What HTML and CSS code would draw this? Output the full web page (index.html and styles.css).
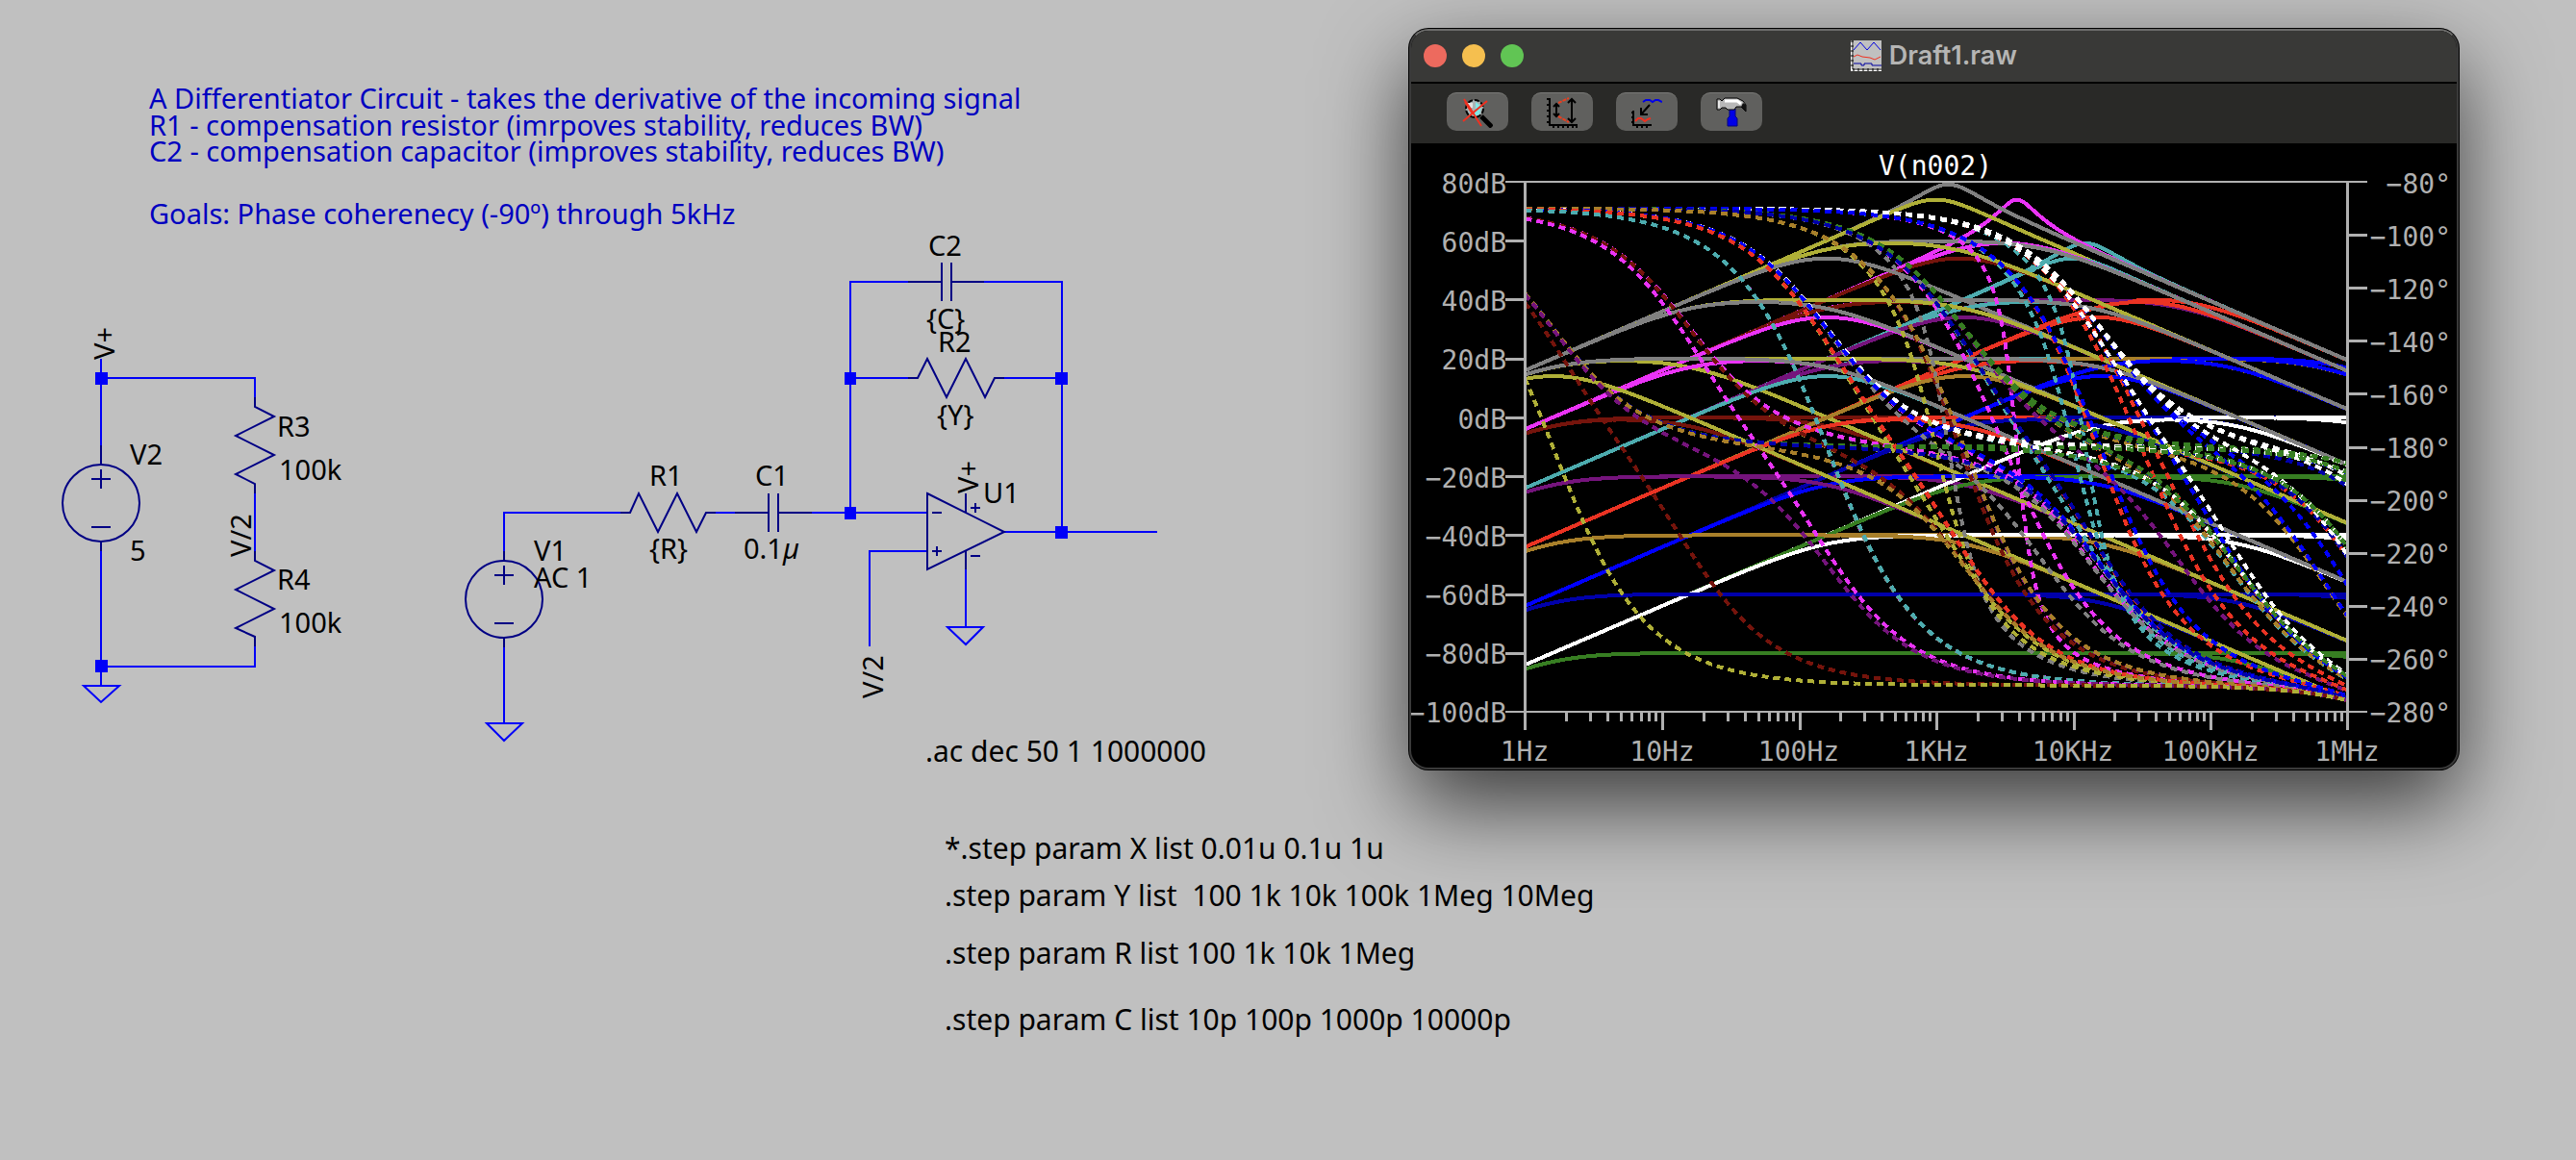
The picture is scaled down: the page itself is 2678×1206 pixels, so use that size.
FILE: index.html
```html
<!DOCTYPE html>
<html lang="en">
<head>
<meta charset="utf-8">
<title>Differentiator circuit</title>
<link rel="stylesheet" href="styles.css">
</head>
<body>
<main class="desk">
  <svg class="schematic" viewBox="0 0 2678 1206" role="img" aria-label="Differentiator circuit schematic">
    <g class="wire">
      <!-- supply and divider -->
      <path d="M105 373V463M105 393H265V413M265 513V573M265 672V693H105M105 573V713M87 713H124L105 730Z"/>
      <!-- input source and series network -->
      <path d="M524 573V533H645M744 533H764M844 533H964M524 673V752M506 752H543L524 770Z"/>
      <!-- feedback and output -->
      <path d="M884 533V293H944M1023 293H1104V553M884 393H944M1044 393H1104M964 573H904V672M1044 553H1203M1004 592V652M985 652H1022L1004 670Z"/>
    </g>
    <g class="part">
      <circle cx="105" cy="523" r="40"/>
      <path d="M105 463V483M105 563V573M95 498H115M105 488V508M95 548H115"/>
      <path d="M265 413V423L285 433L245 453L285 473L245 493L265 503V513"/>
      <path d="M265 573V583L285 593L245 613L285 633L245 653L265 662V672"/>
      <circle cx="524" cy="623" r="40"/>
      <path d="M524 573V583M524 663V673M514 598H534M524 588V608M514 648H534"/>
      <path d="M645 533H655L664 513L684 553L704 513L724 553L734 533H744"/>
      <path d="M764 533H799M799 513V553M809 513V553M809 533H844"/>
      <path d="M944 293H979M979 273V313M989 273V313M989 293H1023"/>
      <path d="M944 393H954L964 373L984 413L1004 373L1024 413L1034 393H1044"/>
      <path d="M964 513L1044 553L964 592ZM969 533H979M969 573H979M974 568V578M1004 513V533M1004 573V592M1009 528H1019M1014 523V533M1009 578H1019"/>
    </g>
    <g class="node">
      <rect x="99" y="387" width="13" height="13"/>
      <rect x="99" y="686" width="13" height="13"/>
      <rect x="878" y="387" width="12" height="13"/>
      <rect x="878" y="527" width="12" height="13"/>
      <rect x="1097" y="387" width="13" height="13"/>
      <rect x="1097" y="547" width="13" height="13"/>
    </g>
    <g class="comment">
      <text x="155" y="113">A Differentiator Circuit - takes the derivative of the incoming signal</text>
      <text x="155" y="141">R1 - compensation resistor (imrpoves stability, reduces BW)</text>
      <text x="155" y="168">C2 - compensation capacitor (improves stability, reduces BW)</text>
      <text x="155" y="233">Goals: Phase coherenecy (-90º) through 5kHz</text>
    </g>
    <g class="label">
      <text transform="translate(119 374) rotate(-90)">V+</text>
      <text x="135" y="483">V2</text>
      <text x="135" y="583">5</text>
      <text x="288" y="454">R3</text>
      <text x="290" y="499">100k</text>
      <text transform="translate(261 579) rotate(-90)">V/2</text>
      <text x="288" y="613">R4</text>
      <text x="290" y="658">100k</text>
      <text x="555" y="583">V1</text>
      <text x="555" y="611">AC 1</text>
      <text x="675" y="505">R1</text>
      <text x="675" y="581">{R}</text>
      <text x="785" y="505">C1</text>
      <text x="773" y="581">0.1<tspan class="mu">µ</tspan></text>
      <text x="965" y="266">C2</text>
      <text x="963" y="342">{C}</text>
      <text x="975" y="366">R2</text>
      <text x="974" y="442">{Y}</text>
      <text transform="translate(1017 513) rotate(-90)">V+</text>
      <text x="1022" y="523">U1</text>
      <text transform="translate(918 726) rotate(-90)">V/2</text>
    </g>
    <g class="directive">
      <text x="962" y="792">.ac dec 50 1 1000000</text>
      <text x="982" y="893">*.step param X list 0.01u 0.1u 1u</text>
      <text x="982" y="942">.step param Y list&#160; 100 1k 10k 100k 1Meg 10Meg</text>
      <text x="982" y="1002">.step param R list 100 1k 10k 1Meg</text>
      <text x="982" y="1071">.step param C list 10p 100p 1000p 10000p</text>
    </g>
  </svg>

  <section class="window" aria-label="Draft1.raw">
    <header class="titlebar">
      <div class="lights">
        <button class="light close" aria-label="Close"></button>
        <button class="light minimize" aria-label="Minimize"></button>
        <button class="light zoom" aria-label="Zoom"></button>
      </div>
      <h1 class="title">
        <svg class="icon" viewBox="0 0 32 32" aria-hidden="true">
          <rect width="32" height="32" fill="#c0c0c0"/>
          <rect width="3" height="32" fill="#fff"/><rect y="29" width="32" height="3" fill="#fff"/>
          <path d="M2 0V30H32" fill="none" stroke="#000" stroke-width="1"/>
          <path d="M0 1H3M0 6H3M0 11H3M0 16H3M0 21H3M0 26H3M3 29V32M8 29V32M13 29V32M18 29V32M23 29V32M28 29V32" stroke="#000"/>
          <path d="M3 10L10 2L17 10L24 2L31 10" fill="none" stroke="#0000e0"/>
          <path d="M3 17L7 15L12 17L20 18L25 20L31 17" fill="none" stroke="#f03020" stroke-width="1"/>
          <path d="M3 24H11V26H14V24H22V26H32" fill="none" stroke="#0000a0" stroke-width="1"/>
        </svg>
        Draft1.raw
      </h1>
    </header>
    <div class="toolbar" role="toolbar" aria-label="Plot tools">
      <button class="tool" aria-label="Zoom to fit">
        <svg class="icon" viewBox="0 0 32 32" aria-hidden="true">
          <path d="M20 20L31 31" stroke="#000" stroke-width="5"/>
          <circle cx="13" cy="12" r="9" fill="#a9b4b4" stroke="#000" stroke-width="2" stroke-dasharray="5 2"/>
          <path d="M14 5L20 10L18 18L12 20L14 12Z" fill="#7fe8e8"/>
          <path d="M6 6H11V11H6Z" fill="#e0e0e0"/>
          <path d="M2 2L8 11L20 30M26 4L14 14L1 25M3 5L10 16" fill="none" stroke="#f03020" stroke-width="2"/>
        </svg>
      </button>
      <button class="tool" aria-label="Autorange">
        <svg class="icon" viewBox="0 0 32 32" aria-hidden="true">
          <path d="M3 1V29H32" fill="none" stroke="#000" stroke-width="2"/>
          <path d="M0 2H3M0 8H3M0 14H3M0 20H3M0 26H3M7 29V32M12 29V32M17 29V32M22 29V32M27 29V32M31 29V32" stroke="#000" stroke-width="2"/>
          <path d="M10 8V19M7 10L10 7L13 10M7 17L10 20L13 17M26 2V26M22 6L26 2L30 6M22 22L26 26L30 22" fill="none" stroke="#000" stroke-width="2"/>
          <path d="M12 6L23 1M12 20L23 26" stroke="#e84020" stroke-width="2" stroke-dasharray="4 1"/>
        </svg>
      </button>
      <button class="tool" aria-label="Add trace">
        <svg class="icon" viewBox="0 0 32 32" aria-hidden="true">
          <path d="M2 14V29H21M0 16H2M0 21H2M0 26H2M6 29V32M11 29V32M16 29V32" fill="none" stroke="#000" stroke-width="2"/>
          <path d="M19 8L10 18M10 11V18H17" fill="none" stroke="#000" stroke-width="2"/>
          <path d="M12 5L15 3L19 3L22 5L25 3L28 3L32 5" fill="none" stroke="#0000e8" stroke-width="2"/>
          <path d="M4 25L7 22H10L14 25L17 23L20 22" fill="none" stroke="#f03020" stroke-width="2"/>
        </svg>
      </button>
      <button class="tool" aria-label="Control panel">
        <svg class="icon" viewBox="0 0 32 32" aria-hidden="true">
          <path d="M14 12H20V20L22 22V30H12V22L14 20Z" fill="#0000e8" stroke="#000084" stroke-width="1"/>
          <path d="M1 2H4L6 4L9 1H22L28 4L31 8V15L26 10H21L19 13H12L10 11H6L4 13H1Z" fill="#b8b8b8" stroke="#000" stroke-width="1"/>
          <path d="M9 4H22L26 7" fill="none" stroke="#fff" stroke-width="3"/>
          <path d="M2 4H4V11H2Z" fill="#e8e8e8"/>
          <path d="M28 6L31 8V15L26 10Z" fill="#111"/>
        </svg>
      </button>
    </div>
    <svg class="plot" viewBox="1467 149 1087 649" role="img" aria-label="Bode plot of V(n002)">
      <clipPath id="area"><rect x="1585" y="190" width="856" height="549"/></clipPath>
      <g id="traces" class="traces" clip-path="url(#area)"></g>
      <path id="frame" class="frame"/>
      <path id="ticks" class="ticks"/>
      <text class="trace-name" x="2012" y="182">V(n002)</text>
      <g class="gain-axis">
        <text x="1566" y="201">80dB</text>
        <text x="1566" y="262">60dB</text>
        <text x="1566" y="323">40dB</text>
        <text x="1566" y="384">20dB</text>
        <text x="1566" y="446">0dB</text>
        <text x="1566" y="507">−20dB</text>
        <text x="1566" y="568">−40dB</text>
        <text x="1566" y="629">−60dB</text>
        <text x="1566" y="690">−80dB</text>
        <text x="1566" y="751">−100dB</text>
      </g>
      <g class="phase-axis">
        <text x="2548" y="201">−80°</text>
        <text x="2548" y="256">−100°</text>
        <text x="2548" y="311">−120°</text>
        <text x="2548" y="366">−140°</text>
        <text x="2548" y="421">−160°</text>
        <text x="2548" y="476">−180°</text>
        <text x="2548" y="531">−200°</text>
        <text x="2548" y="586">−220°</text>
        <text x="2548" y="641">−240°</text>
        <text x="2548" y="696">−260°</text>
        <text x="2548" y="751">−280°</text>
      </g>
      <g class="freq-axis">
        <text x="1585" y="791">1Hz</text>
        <text x="1728" y="791">10Hz</text>
        <text x="1870" y="791">100Hz</text>
        <text x="2013" y="791">1KHz</text>
        <text x="2155" y="791">10KHz</text>
        <text x="2298" y="791">100KHz</text>
        <text x="2440" y="791">1MHz</text>
      </g>
    </svg>
  </section>
</main>
<script src="plot.js"></script>
</body>
</html>
```
FILE: styles.css
```css
* {
  box-sizing: border-box;
}

body {
  margin: 0;
  background: #c0c0c0;
}

.desk {
  position: relative;
  overflow: hidden;
}

/* Schematic */
.schematic {
  display: block;
  width: 100%;
  height: auto;
  font-family: "Noto Sans", "Open Sans", sans-serif;
  font-size: 29px;
}

.wire {
  fill: none;
  stroke: #0000f8;
  stroke-width: 2;
}

.part {
  fill: none;
  stroke: #000084;
  stroke-width: 2;
}

.node {
  fill: #0000f8;
}

.comment {
  fill: #0000c0;
}

.label,
.directive {
  fill: #000;
}

.directive {
  font-size: 30px;
}

.mu {
  font-style: italic;
}

/* Waveform window */
.window {
  position: absolute;
  top: 30px;
  left: 54.7%;
  width: 40.74%;
  overflow: hidden;
  border: 2px solid #3a3a3a;
  border-top-color: #6c6c6b;
  border-radius: 20px;
  background: #000;
  box-shadow: 0 0 0 1px #000, 0 36px 90px rgba(0, 0, 0, 0.7);
}

.titlebar {
  display: grid;
  grid-template-columns: 1fr auto 1fr;
  align-items: center;
  height: 55px;
  padding: 0 13px 2px;
  border-bottom: 2px solid #000;
  background: #393937;
}

.lights {
  display: flex;
  gap: 16px;
}

.light {
  width: 24px;
  height: 24px;
  padding: 0;
  border: 0;
  border-radius: 50%;
}

.close {
  background: #ed6a5e;
}

.minimize {
  background: #f5bf4f;
}

.zoom {
  background: #61c554;
}

.title {
  display: flex;
  align-items: center;
  gap: 8px;
  margin: 0;
  color: #b5b5b4;
  font: 600 27px/32px Inter, "Liberation Sans", sans-serif;
}

.icon {
  display: block;
  width: 32px;
  height: 32px;
}

.toolbar {
  display: flex;
  gap: 24px;
  height: 62px;
  padding: 9px 37px;
  background: #292927;
}

.tool {
  display: flex;
  align-items: center;
  justify-content: center;
  width: 64px;
  height: 40px;
  padding: 0;
  border: 0;
  border-top: 1px solid #7a7a78;
  border-radius: 10px;
  background: #60605e;
}

/* Plot */
.plot {
  display: block;
  width: 100%;
  height: auto;
  font-family: "DejaVu Sans Mono", "Liberation Mono", monospace;
  font-size: 28px;
  fill: #b0b0b0;
}

.traces {
  fill: none;
  stroke-width: 4;
  shape-rendering: crispEdges;
}

.phase {
  stroke-dasharray: 7 5;
}

.frame,
.ticks {
  fill: none;
  stroke: #b0b0b0;
  shape-rendering: crispEdges;
}

.frame {
  stroke-width: 2;
}

.ticks {
  stroke-width: 3;
}

.trace-name {
  fill: #fff;
  text-anchor: middle;
}

.gain-axis,
.phase-axis {
  text-anchor: end;
}

.freq-axis {
  text-anchor: middle;
}
```
FILE: plot.js
```js
// Stepped AC sweep of the differentiator, drawn as gain (solid) and phase (dashed).
const SVG = "http://www.w3.org/2000/svg";
const LEFT = 1585.5, RIGHT = 2440.5, TOP = 189, BOTTOM = 740;
const DECADE = (RIGHT - LEFT) / 6;

const COLORS = ["#ffffff", "#0000ff", "#eb3323", "#4dacaf", "#ea33f7", "#808080",
                "#377e22", "#0000aa", "#a87f2a", "#75147c", "#75140c", "#afaf37"];
const Y = [100, 1e3, 1e4, 1e5, 1e6, 1e7];
const R = [100, 1e3, 1e4, 1e6];
const C = [10e-12, 100e-12, 1e-9, 10e-9];
const C1 = 0.1e-6;
const AVOL = 1e6, GBW = 10e6, POLE2 = 10e6;

const mul = (a, b) => [a[0] * b[0] - a[1] * b[1], a[0] * b[1] + a[1] * b[0]];
const add = (a, b) => [a[0] + b[0], a[1] + b[1]];
const inv = a => { const d = a[0] * a[0] + a[1] * a[1]; return [a[0] / d, -a[1] / d]; };

function response(f, y, r, c) {
  const w = 2 * Math.PI * f;
  const zf = inv([1 / y, w * c]);
  const z1 = [r, -1 / (w * C1)];
  const invA = mul([1 / AVOL, f / GBW], [1, f / POLE2]);
  const ratio = mul(zf, inv(z1));
  const den = add([1, 0], mul(invA, add([1, 0], ratio)));
  const h = mul([-ratio[0], -ratio[1]], inv(den));
  let phase = Math.atan2(h[1], h[0]) * 180 / Math.PI;
  if (phase > 0) phase -= 360;
  return [20 * Math.log10(Math.hypot(h[0], h[1])), phase];
}

const gains = [], phases = [];
let step = 0;
for (const c of C) for (const r of R) for (const y of Y) {
  const g = [], p = [];
  for (let i = 0; i <= 300; i++) {
    const [db, deg] = response(10 ** (i / 50), y, r, c);
    const x = (LEFT + i / 50 * DECADE).toFixed(1);
    g.push(x + "," + (TOP + (80 - db) * (BOTTOM - TOP) / 180).toFixed(1));
    p.push(x + "," + (TOP + (-80 - deg) * (BOTTOM - TOP) / 200).toFixed(1));
  }
  const color = COLORS[step++ % COLORS.length];
  gains.push([g, color, "gain"]);
  phases.push([p, color, "phase"]);
}

const traces = document.getElementById("traces");
for (const [points, color, kind] of [...gains, ...phases]) {
  const line = document.createElementNS(SVG, "polyline");
  line.setAttribute("class", kind);
  line.setAttribute("points", points.join(" "));
  line.setAttribute("stroke", color);
  traces.append(line);
}

document.getElementById("frame").setAttribute("d", `M1565 ${TOP}H2461M1565 ${BOTTOM}H2461`);
let d = `M${LEFT} ${TOP}V759M${RIGHT} ${TOP}V759`;
for (let i = 1; i < 9; i++) d += `M1565 ${Math.round(TOP + i * (BOTTOM - TOP) / 9) + 0.5}H1585`;
for (let i = 1; i < 10; i++) d += `M2441 ${Math.round(TOP + i * (BOTTOM - TOP) / 10) + 0.5}H2461`;
for (let i = 0; i < 6; i++) {
  for (let m = 1; m < 10; m++) {
    const x = Math.round(LEFT + (i + Math.log10(m)) * DECADE) + 0.5;
    if (i || m > 1) d += `M${x} ${BOTTOM}V${m === 1 ? 759 : 750}`;
  }
}
document.getElementById("ticks").setAttribute("d", d);
```
